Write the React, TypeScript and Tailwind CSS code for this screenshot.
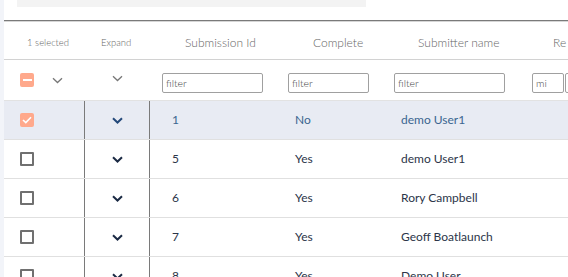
import React from 'react';

const rows = [
    { id: '1', complete: 'No', name: 'demo User1', selected: true },
    { id: '5', complete: 'Yes', name: 'demo User1', selected: false },
    { id: '6', complete: 'Yes', name: 'Rory Campbell', selected: false },
    { id: '7', complete: 'Yes', name: 'Geoff Boatlaunch', selected: false },
    { id: '8', complete: 'Yes', name: 'Demo User', selected: false },
];

const Chevron: React.FC<{ className?: string; strokeWidth?: number }> = ({ className, strokeWidth = 2 }) => (
    <svg width="11" height="7" viewBox="0 0 11 7" fill="none" className={className}>
        <path d="M1 1.2 L5.5 5.5 L10 1.2" stroke="currentColor" strokeWidth={strokeWidth} strokeLinejoin="miter" />
    </svg>
);

const FilterInput: React.FC<{ width: string; value?: string }> = ({ width, value }) => (
    <input
        readOnly
        value={value}
        placeholder="filter"
        className={`${width} h-[20px] shrink-0 rounded-[2px] border border-[#a0a0a0] bg-white px-[3px] text-[10.5px] font-light text-[#444] placeholder:text-[#444] outline-none`}
    />
);

export default function App() {
    return (
        <div className="flex h-[277px] w-[568px] overflow-hidden bg-white" style={{ fontFamily: 'Lato, "Open Sans", sans-serif' }}>
            {/* left strip */}
            <div className="w-[4px] shrink-0 bg-[#f2f4f9]" />

            <div className="flex min-w-0 flex-1 flex-col">
                {/* toolbar placeholder */}
                <div className="h-[20px] shrink-0 pl-[13px]">
                    <div className="h-[7px] w-[349px] bg-[#f3f3f3]" />
                </div>
                <div className="h-[1px] shrink-0 bg-[#7a7a7a]" />
                <div className="h-[1px] shrink-0 bg-[#d6d6d6]" />

                {/* header */}
                <div className="flex h-[37px] shrink-0 items-center overflow-hidden whitespace-nowrap pt-[5px] font-light text-[#666]">
                    <div className="w-[81px] shrink-0 pl-[23px] text-[9.5px]">1 selected</div>
                    <div className="w-[65px] shrink-0 pl-[16px] text-[9.5px]">Expand</div>
                    <div className="w-[126px] shrink-0 pl-[35px] text-[12px]">Submission Id</div>
                    <div className="w-[106px] shrink-0 pl-[37px] text-[12px]">Complete</div>
                    <div className="w-[138px] shrink-0 pl-[36px] text-[12px]">Submitter name</div>
                    <div className="w-[48px] shrink-0 overflow-hidden pl-[33px] text-[12px]">Re</div>
                </div>
                <div className="h-[1px] shrink-0 bg-[#d2d2d2]" />

                {/* filter row */}
                <div className="flex h-[40px] shrink-0 items-center">
                    <div className="flex w-[81px] shrink-0 items-center pl-[16px]">
                        <div className="flex h-[14px] w-[14px] items-center justify-center rounded-[2px] bg-[#ffa98c]">
                            <div className="h-[2px] w-[9px] bg-white" />
                        </div>
                        <Chevron className="ml-[18px] mt-[1px] text-[#777]" strokeWidth={1.3} />
                    </div>
                    <div className="flex w-[65px] shrink-0 justify-center pb-[3px]">
                        <Chevron className="ml-[-1px] text-[#777]" strokeWidth={1.3} />
                    </div>
                    <div className="flex w-[126px] shrink-0 pl-[12px] pt-[6px]">
                        <FilterInput width="w-[101px]" />
                    </div>
                    <div className="flex w-[106px] shrink-0 pl-[12px] pt-[6px]">
                        <FilterInput width="w-[81px]" />
                    </div>
                    <div className="flex w-[138px] shrink-0 pl-[12px] pt-[6px]">
                        <FilterInput width="w-[111px]" />
                    </div>
                    <div className="flex shrink-0 gap-[1px] pl-[12px] pt-[6px]">
                        <FilterInput width="w-[32px]" value="mi" />
                        <FilterInput width="w-[40px]" />
                    </div>
                </div>
                <div className="h-[1px] shrink-0 bg-[#e2e2e2]" />

                {/* data rows */}
                {rows.map((r) => (
                    <div key={r.id} className="shrink-0">
                        <div
                            className={`flex h-[38px] items-stretch text-[12px] ${
                                r.selected ? 'bg-[#e8ebf3] text-[#3a6590]' : 'bg-white text-[#2c3549]'
                            }`}
                        >
                            <div className="flex w-[81px] shrink-0 items-center border-r border-[#7a7a7a] pl-[16px]">
                                {r.selected ? (
                                    <div className="flex h-[14px] w-[14px] items-center justify-center rounded-[2px] bg-[#ffa98c]">
                                        <svg width="10" height="8" viewBox="0 0 10 8" fill="none">
                                            <path d="M1 4 L3.8 6.6 L9 1.2" stroke="white" strokeWidth="1.6" />
                                        </svg>
                                    </div>
                                ) : (
                                    <div className="h-[14px] w-[14px] rounded-[1px] border-2 border-[#707070]" />
                                )}
                            </div>
                            <div className="flex w-[65px] shrink-0 items-center justify-center border-r border-[#7a7a7a]">
                                <Chevron className={r.selected ? 'text-[#24497a]' : 'text-[#1b2a44]'} />
                            </div>
                            <div className="flex w-[126px] shrink-0 items-center pl-[22px]">{r.id}</div>
                            <div className="flex w-[106px] shrink-0 items-center pl-[19px]">{r.complete}</div>
                            <div className="flex w-[138px] shrink-0 items-center pl-[19px]">{r.name}</div>
                            <div className="flex-1" />
                        </div>
                        <div className="h-[1px] bg-[#e0e0e0]" />
                    </div>
                ))}
            </div>
        </div>
    );
}
